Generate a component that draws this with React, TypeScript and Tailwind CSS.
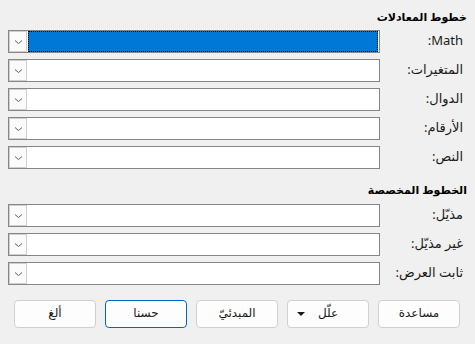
const font = { fontFamily: '"Noto Sans", "DejaVu Sans", sans-serif' };

function Chevron() {
  return (
    <svg width="9" height="6" viewBox="0 0 9 6" className="block">
      <path d="M1 1.5 L4.5 4.5 L8 1.5" fill="none" stroke="#606060" strokeWidth="1" />
    </svg>
  );
}

function Combo({ focused }: { focused?: boolean }) {
  return (
    <div dir="ltr" className="flex-1 h-[23px] border border-[#868686] bg-white flex items-stretch">
      <div className="w-[18px] border border-[#cfcfcf] bg-[#fbfbfb] flex items-center justify-center">
        <Chevron />
      </div>
      {focused ? (
        <div className="flex-1 ml-[1px] mr-[1px] bg-[#0078d7] border border-dotted border-black" />
      ) : (
        <div className="flex-1" />
      )}
    </div>
  );
}

function Row({ label, focused }: { label: string; focused?: boolean }) {
  return (
    <div className="flex items-center h-[23px] mb-[6px]">
      <div className="w-[87px] pr-[4px] text-[13px] leading-[16px] -mt-[3px] text-[#1a1a1a]">{label}</div>
      <Combo focused={focused} />
    </div>
  );
}

function Btn({ label, primary, menu }: { label: string; primary?: boolean; menu?: boolean }) {
  return (
    <div
      className={`w-[82px] h-[28px] rounded-[4px] border bg-[#fdfdfd] flex items-center justify-center relative text-[12px] text-[#1a1a1a] ${
        primary ? "border-[#0067c0]" : "border-[#d0d0d0]"
      }`}
    >
      <span className="-mt-[2px]">{label}</span>
      {menu && (
        <span className="absolute left-[9px] top-[11px] w-0 h-0 border-l-[4px] border-r-[4px] border-t-[4px] border-l-transparent border-r-transparent border-t-[#1a1a1a]" />
      )}
    </div>
  );
}

export default function App() {
  return (
    <div dir="rtl" style={font} className="w-[475px] h-[344px] bg-[#f0f0f0] overflow-hidden">
      <div className="pt-[8px] pr-[8px] pl-[8px]">
        <div className="h-[22px] text-[11px] font-bold text-black leading-[18px]">خطوط المعادلات</div>
        <Row label="Math:" focused />
        <Row label="المتغيرات:" />
        <Row label="الدوال:" />
        <Row label="الأرقام:" />
        <Row label="النص:" />
        <div className="h-[29px] flex items-center text-[11px] font-bold text-black pt-[2px]">الخطوط المخصصة</div>
        <Row label="مذيّل:" />
        <Row label="غير مذيّل:" />
        <Row label="ثابت العرض:" />
      </div>
      <div className="flex gap-[9px] pr-[15px] mt-[15px]">
        <Btn label="مساعدة" />
        <Btn label="علّل" menu />
        <Btn label="المبدئيّ" />
        <Btn label="حسنا" primary />
        <Btn label="ألغ" />
      </div>
    </div>
  );
}
